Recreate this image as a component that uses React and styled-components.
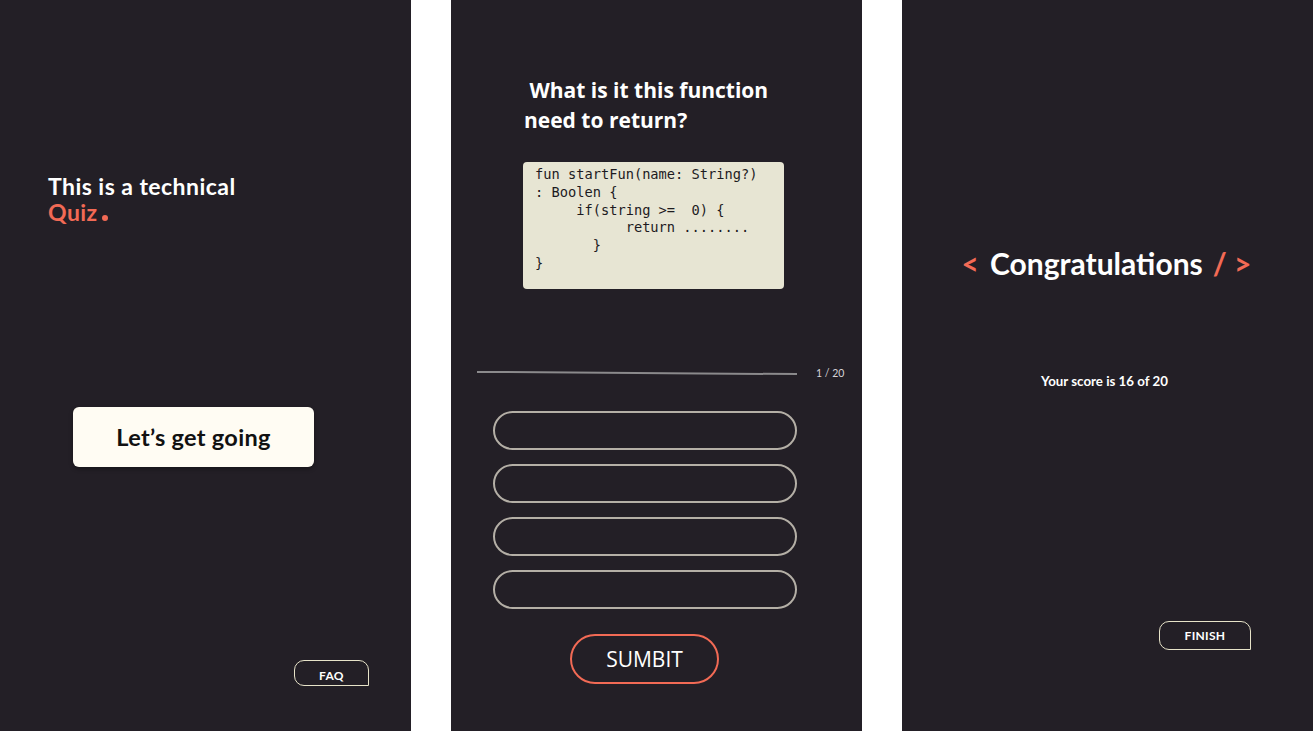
import React from "react";
import styled, { createGlobalStyle } from "styled-components";

const Global = createGlobalStyle`
  html, body { margin: 0; padding: 0; background: #ffffff; }
  body { font-family: Lato, "Noto Sans", sans-serif; }
  * { box-sizing: border-box; }
`;

const C = {
  bg: "#231f26",
  coral: "#f26a55",
  cream: "#fffcf3",
  line: "#e7e3c9",
};

const Page = styled.div`
  display: flex;
  gap: 40px;
  width: 1313px;
  height: 731px;
  background: #ffffff;
`;

const Panel = styled.section`
  width: 411px;
  height: 731px;
  background: ${C.bg};
  display: flex;
  flex-direction: column;
  position: relative;
  overflow: hidden;
`;

/* ---------- Panel 1 ---------- */
const IntroTitle = styled.h1`
  margin: 173px 0 0 48px;
  font-family: Lato, sans-serif;
  font-weight: 700;
  font-size: 23px;
  letter-spacing: 0.45px;
  line-height: 26px;
  color: #ffffff;
`;

const Accent = styled.span`
  color: ${C.coral};
`;

const Marker = styled.span`
  display: inline-block;
  color: ${C.coral};
  margin: ${(p) => (p.$side === "left" ? "0 11px 0 0" : "0 0 0 10px")};
`;

const Dot = styled.span`
  display: inline-block;
  width: 6px;
  height: 6px;
  border-radius: 50%;
  background: ${C.coral};
  margin-left: 4px;
  vertical-align: baseline;
`;

const StartButton = styled.button`
  margin: 182px 0 0 73px;
  width: 241px;
  height: 60px;
  border: none;
  border-radius: 6px;
  background: ${C.cream};
  box-shadow: 0 2px 4px rgba(0, 0, 0, 0.35);
  font-family: Lato, sans-serif;
  font-weight: 700;
  font-size: 23.5px;
  letter-spacing: 0.3px;
  color: #111111;
  padding-right: 6px;
  cursor: pointer;
`;

const OutlineTag = styled.button`
  margin: auto ${(p) => p.$right}px ${(p) => p.$bottom}px auto;
  width: ${(p) => p.$w}px;
  height: ${(p) => p.$h}px;
  background: transparent;
  border: 1px solid ${C.line};
  border-radius: 10px 10px 0 10px;
  color: #ffffff;
  font-family: Lato, sans-serif;
  font-weight: 700;
  font-size: ${(p) => p.$fs}px;
  letter-spacing: 0.3px;
  padding: ${(p) => p.$pt}px 0 0;
  cursor: pointer;
`;

/* ---------- Panel 2 ---------- */
const Question = styled.h2`
  margin: 75px 0 0 73px;
  font-family: "Open Sans", sans-serif;
  font-weight: 700;
  font-size: 21px;
  line-height: 30px;
  color: #ffffff;
  white-space: pre;
`;

const CodeBox = styled.pre`
  margin: 27px 0 0 72px;
  width: 261px;
  height: 127px;
  padding: 4px 0 0 12px;
  background: #e7e5d3;
  border-radius: 4px;
  font-family: "DejaVu Sans Mono", "Liberation Mono", monospace;
  font-size: 13.7px;
  line-height: 17.8px;
  color: #1d1b1f;
  white-space: pre;
`;

const ProgressRow = styled.div`
  margin: 78px 0 0 26px;
  display: flex;
  align-items: center;
  gap: 19px;
`;

const Track = styled.div`
  width: 320px;
  height: 2px;
  background: #8b8a8c;
  transform: rotate(0.4deg);
`;

const Counter = styled.span`
  font-family: Lato, sans-serif;
  font-size: 10.5px;
  color: #d6d3d8;
`;

const Answers = styled.div`
  margin: 32px 0 0 42px;
  display: flex;
  flex-direction: column;
  gap: 14px;
`;

const Answer = styled.button`
  width: 304px;
  height: 39px;
  border-radius: 20px;
  border: 2px solid #b4afa6;
  background: transparent;
  cursor: pointer;
`;

const Submit = styled.button`
  margin: 25px 0 0 119px;
  width: 149px;
  height: 50px;
  border-radius: 25px;
  border: 2px solid ${C.coral};
  background: transparent;
  font-family: "Open Sans", sans-serif;
  font-weight: 400;
  font-size: 21px;
  color: #ffffff;
  cursor: pointer;
`;

/* ---------- Panel 3 ---------- */
const Congrats = styled.h2`
  margin: 243px 0 0;
  padding-right: 2px;
  text-align: center;
  font-family: Lato, sans-serif;
  font-weight: 700;
  font-size: 30px;
  line-height: 40px;
  color: #ffffff;
  white-space: pre;
`;

const Score = styled.p`
  margin: 90px 0 0;
  padding-right: 6px;
  text-align: center;
  font-family: Lato, sans-serif;
  font-weight: 700;
  font-size: 13.3px;
  color: #ffffff;
`;

export default function App() {
  return (
    <>
      <Global />
      <Page>
        <Panel>
          <IntroTitle>
            This is a technical
            <br />
            <Accent>Quiz</Accent>
            <Dot />
          </IntroTitle>
          <StartButton>Let’s get going</StartButton>
          <OutlineTag $w={75} $h={26} $fs={12} $pt={5} $right={42} $bottom={45}>
            FAQ
          </OutlineTag>
        </Panel>

        <Panel>
          <Question>{" What is it this function\nneed to return?"}</Question>
          <CodeBox>{`fun startFun(name: String?)
: Boolen {
     if(string >=  0) {
           return ........
       }
}`}</CodeBox>
          <ProgressRow>
            <Track />
            <Counter>1 / 20</Counter>
          </ProgressRow>
          <Answers>
            <Answer />
            <Answer />
            <Answer />
            <Answer />
          </Answers>
          <Submit>SUMBIT</Submit>
        </Panel>

        <Panel>
          <Congrats>
            <Marker $side="left">{"<"}</Marker>
            Congratulations
            <Marker $side="right">{"/ >"}</Marker>
          </Congrats>
          <Score>Your score is 16 of 20</Score>
          <OutlineTag $w={92} $h={29} $fs={12} $pt={0} $right={62} $bottom={81}>
            FINISH
          </OutlineTag>
        </Panel>
      </Page>
    </>
  );
}
